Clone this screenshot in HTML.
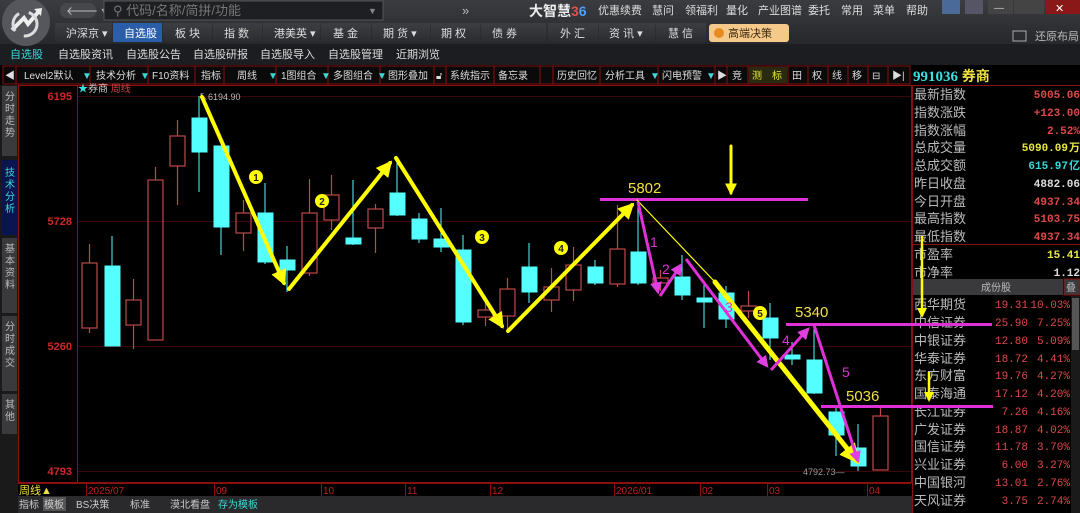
<!DOCTYPE html>
<html><head><meta charset="utf-8"><style>
html,body{margin:0;padding:0;background:#000;width:1080px;height:513px;overflow:hidden}
svg{display:block;font-family:"Liberation Sans","Noto Sans CJK SC",sans-serif}
</style></head><body>
<svg width="1080" height="513" viewBox="0 0 1080 513" xmlns="http://www.w3.org/2000/svg">
<defs>
<marker id="ya" viewBox="0 0 10 10" refX="8" refY="5" markerWidth="4" markerHeight="4" orient="auto"><path d="M0,0 L10,5 L0,10 z" fill="#ffff00"/></marker>
<marker id="ma" viewBox="0 0 10 10" refX="8" refY="5" markerWidth="4" markerHeight="4" orient="auto"><path d="M0,0 L10,5 L0,10 z" fill="#e040e0"/></marker>
<linearGradient id="tb" x1="0" y1="0" x2="0" y2="1"><stop offset="0" stop-color="#3a3c40"/><stop offset="1" stop-color="#26282b"/></linearGradient>
<linearGradient id="bt" x1="0" y1="0" x2="0" y2="1"><stop offset="0" stop-color="#3c3e42"/><stop offset="1" stop-color="#2a2c2f"/></linearGradient>
</defs>
<!-- top bars -->
<rect x="0" y="0" width="1080" height="44" fill="url(#tb)"/>
<rect x="0" y="44" width="1080" height="21" fill="#1c1d20"/>
<circle cx="26" cy="22" r="24" fill="#55575c"/>
<path d="M12 30 L24 18 L28 24 L40 10" stroke="#eee" stroke-width="4" fill="none"/>
<path d="M34 9 L42 8 L41 16" fill="#eee"/>
<circle cx="25" cy="24" r="12" stroke="#ddd" stroke-width="3" fill="none" stroke-dasharray="20 10"/>
<rect x="60" y="3" width="36" height="15" rx="7" fill="#46484c"/>
<text x="66" y="15" fill="#bbb" font-size="12">🡐 ▾</text>
<rect x="104" y="1" width="279" height="19" fill="#1e1f22" stroke="#555"/>
<text x="113" y="15" fill="#777" font-size="13">⚲ 代码/名称/简拼/功能</text>
<text x="368" y="14" fill="#888" font-size="9">▼</text>
<text x="462" y="15" fill="#bbb" font-size="13">»</text>
<text x="529" y="16" fill="#eee" font-size="14" font-weight="bold">大智慧<tspan fill="#e05050">3</tspan><tspan fill="#4aa0ff">6</tspan></text>
<g fill="#ddd" font-size="11">
<text x="598" y="14">优惠续费</text><text x="652" y="14">慧问</text><text x="685" y="14">领福利</text><text x="726" y="14">量化</text><text x="758" y="14">产业图谱</text><text x="808" y="14">委托</text><text x="841" y="14">常用</text><text x="873" y="14">菜单</text><text x="906" y="14">帮助</text>
</g>
<rect x="942" y="0" width="18" height="14" fill="#4a6a9a"/><rect x="965" y="0" width="18" height="14" fill="#556"/>
<rect x="988" y="0" width="25" height="14" fill="#444"/><rect x="1014" y="0" width="30" height="14" fill="#444"/><rect x="1046" y="0" width="34" height="14" fill="#8a1818"/>
<text x="1055" y="12" fill="#fff" font-size="11">✕</text><text x="994" y="11" fill="#ccc" font-size="10">—</text>
<g font-size="11" fill="#ddd">
<rect x="55" y="23" width="57" height="19" fill="url(#bt)"/><text x="66" y="37">沪深京 ▾</text>
<rect x="113" y="23" width="49" height="19" fill="#2a5ea8"/><text x="124" y="37" fill="#fff">自选股</text>
<rect x="163" y="23" width="49" height="19" fill="url(#bt)"/><text x="175" y="37">板  块</text>
<rect x="213" y="23" width="49" height="19" fill="url(#bt)"/><text x="224" y="37">指  数</text>
<rect x="263" y="23" width="57" height="19" fill="url(#bt)"/><text x="274" y="37">港美英 ▾</text>
<rect x="321" y="23" width="50" height="19" fill="url(#bt)"/><text x="333" y="37">基  金</text>
<rect x="372" y="23" width="58" height="19" fill="url(#bt)"/><text x="383" y="37">期  货 ▾</text>
<rect x="431" y="23" width="49" height="19" fill="url(#bt)"/><text x="441" y="37">期  权</text>
<rect x="481" y="23" width="65" height="19" fill="url(#bt)"/><text x="492" y="37">债  券</text>
<rect x="548" y="23" width="50" height="19" fill="url(#bt)"/><text x="560" y="37">外  汇</text>
<rect x="599" y="23" width="56" height="19" fill="url(#bt)"/><text x="609" y="37">资  讯 ▾</text>
<rect x="656" y="23" width="50" height="19" fill="url(#bt)"/><text x="668" y="37">慧  信</text>
<rect x="709" y="24" width="80" height="18" rx="3" fill="#f5c98a"/><text x="728" y="37" fill="#3a2a10">高端决策</text><circle cx="719" cy="33" r="5" fill="#e88a20"/>
<text x="1035" y="40" fill="#bbb">还原布局</text><rect x="1013" y="31" width="13" height="10" fill="none" stroke="#aaa"/>
</g>
<g font-size="11" fill="#ddd">
<text x="10" y="58" fill="#3cd8d8">自选股</text><text x="58" y="58">自选股资讯</text><text x="126" y="58">自选股公告</text><text x="193" y="58">自选股研报</text><text x="260" y="58">自选股导入</text><text x="328" y="58">自选股管理</text><text x="396" y="58">近期浏览</text>
</g>
<!-- toolbar row -->
<rect x="0" y="65" width="1080" height="20" fill="#000"/>
<rect x="3" y="66" width="907" height="18" fill="#0a0a0a" stroke="#8a1010"/>
<g stroke="#8a1010"><path d="M16 66v18M90 66v18M148 66v18M195 66v18M224 66v18M276 66v18M328 66v18M380 66v18M434 66v18M446 66v18M494 66v18M540 66v18M553 66v18M600 66v18M658 66v18M715 66v18M727 66v18M748 66v18M768 66v18M788 66v18M808 66v18M828 66v18M848 66v18M868 66v18M888 66v18"/></g>
<rect x="749" y="67" width="38" height="16" fill="#2a2a10"/>
<g font-size="10" fill="#ddd">
<text x="5" y="79">◀</text><text x="24" y="79">Level2默认</text><text x="82" y="79" fill="#3cd8d8">▼</text><text x="96" y="79">技术分析</text><text x="140" y="79" fill="#3cd8d8">▼</text><text x="152" y="79">F10资料</text><text x="201" y="79">指标</text><text x="237" y="79">周线</text><text x="268" y="79" fill="#3cd8d8">▼</text><text x="281" y="79">1图组合</text><text x="321" y="79" fill="#3cd8d8">▼</text><text x="333" y="79">多图组合</text><text x="377" y="79" fill="#3cd8d8">▼</text><text x="388" y="79">图形叠加</text><text x="436" y="79">🔓︎</text><text x="450" y="79">系统指示</text><text x="498" y="79">备忘录</text><text x="557" y="79">历史回忆</text><text x="605" y="79">分析工具</text><text x="650" y="79" fill="#3cd8d8">▼</text><text x="662" y="79">闪电预警</text><text x="706" y="79" fill="#3cd8d8">▼</text><text x="717" y="79">▶</text><text x="732" y="79">竞</text><text x="752" y="79" fill="#e8e840">测</text><text x="772" y="79" fill="#e8e840">标</text><text x="792" y="79">田</text><text x="812" y="79">权</text><text x="832" y="79">线</text><text x="852" y="79">移</text><text x="872" y="79">⊟</text><text x="892" y="79">▶|</text>
</g>
<text x="913" y="81" font-size="15" font-weight="bold" fill="#3ce0e0" font-family="Liberation Serif,serif">991036 <tspan fill="#f0e040" font-family="Noto Sans CJK SC,sans-serif" font-size="14">券商</tspan></text>
<!-- left side tabs -->
<rect x="0" y="85" width="18" height="428" fill="#1a1a1a"/>
<rect x="2" y="86" width="15" height="70" fill="#3a3a3c"/>
<rect x="2" y="160" width="15" height="75" fill="#0a1450"/>
<rect x="2" y="238" width="15" height="75" fill="#3a3a3c"/>
<rect x="2" y="316" width="15" height="75" fill="#3a3a3c"/>
<rect x="2" y="394" width="15" height="40" fill="#3a3a3c"/>
<g font-size="10" fill="#bbb" text-anchor="middle">
<text x="10" y="100">分</text><text x="10" y="112">时</text><text x="10" y="124">走</text><text x="10" y="136">势</text>
<text x="10" y="176" fill="#3cd8d8">技</text><text x="10" y="188" fill="#3cd8d8">术</text><text x="10" y="200" fill="#3cd8d8">分</text><text x="10" y="212" fill="#3cd8d8">析</text>
<text x="10" y="252">基</text><text x="10" y="264">本</text><text x="10" y="276">资</text><text x="10" y="288">料</text>
<text x="10" y="330">分</text><text x="10" y="342">时</text><text x="10" y="354">成</text><text x="10" y="366">交</text>
<text x="10" y="408">其</text><text x="10" y="420">他</text>
</g>
<!-- chart frame -->
<rect x="18.5" y="85.5" width="893" height="397" fill="#000" stroke="#8a1010"/>
<path d="M77.5 85v398" stroke="#8a1010"/>
<g stroke="#3a0808"><path d="M78 221.5h833M78 346.5h833M78 96.5h833M78 471.5h833"/></g>
<g fill="#d02828" font-size="11" font-weight="bold" text-anchor="end">
<text x="72" y="100">6195</text><text x="72" y="225">5728</text><text x="72" y="350">5260</text><text x="72" y="475">4793</text>
</g>
<text x="78" y="92" font-size="10" fill="#ccc"><tspan fill="#3ce0e0">★</tspan>券商 <tspan fill="#d04040">周线</tspan></text>
<text x="199" y="100" font-size="9" fill="#bbb">↖6194.90</text>
<text x="803" y="475" font-size="9" fill="#999">4792.73—</text>
<!-- candles -->
<g stroke="#c04848" fill="none" stroke-width="1.2">
<path d="M89.5 244v19M89.5 328v5"/><rect x="82" y="263" width="15" height="65"/>
<path d="M133.5 279v70"/><rect x="126" y="300" width="15" height="25" fill="#000"/>
<path d="M155.5 167v13"/><rect x="148" y="180" width="15" height="160"/>
<path d="M177.5 120v16M177.5 166v39"/><rect x="170" y="136" width="15" height="30"/>
<path d="M243.5 200v13M243.5 233v18"/><rect x="236" y="213" width="15" height="20"/>
<path d="M309.5 179v34M309.5 273v3"/><rect x="302" y="213" width="15" height="60"/>
<path d="M331.5 175v20M331.5 220v10"/><rect x="324" y="195" width="15" height="25"/>
<path d="M375.5 204v5M375.5 228v25"/><rect x="368" y="209" width="15" height="19"/>
<path d="M485.5 303v7M485.5 317v9"/><rect x="478" y="310" width="15" height="7"/>
<path d="M507.5 278v11M507.5 316v17"/><rect x="500" y="289" width="15" height="27"/>
<path d="M551.5 268v19M551.5 300v12"/><rect x="544" y="287" width="15" height="13"/>
<path d="M573.5 247v18M573.5 290v11"/><rect x="566" y="265" width="15" height="25"/>
<path d="M617.5 205v44M617.5 284v3"/><rect x="610" y="249" width="15" height="35"/>
<path d="M660.5 270v8M660.5 283v8"/><rect x="653" y="278" width="15" height="5"/>
<path d="M748.5 291v15M748.5 311v7"/><rect x="741" y="306" width="15" height="5"/>
<path d="M880.5 405v11"/><rect x="873" y="416" width="15" height="54"/>
</g>
<g fill="#54ffff" stroke="#54ffff">
<path d="M112 236v110M199 96v96M221 146v109M265 183v81M287 246v46M353 180v65M397 157v59M419 213v30M441 208v44M463 235v90M529 243v60M595 260v25M638 200v85M682 255v45M704 285v43M726 286v42M770 303v57M792 342v23M814 324v70M836 405v51M858 424v47"/>
<rect x="105" y="266" width="15" height="80"/>
<rect x="192" y="118" width="15" height="34"/>
<rect x="214" y="146" width="15" height="81"/>
<rect x="258" y="213" width="15" height="49"/>
<rect x="280" y="260" width="15" height="10"/>
<rect x="346" y="238" width="15" height="6"/>
<rect x="390" y="193" width="15" height="22"/>
<rect x="412" y="219" width="15" height="20"/>
<rect x="434" y="239" width="15" height="8"/>
<rect x="456" y="250" width="15" height="72"/>
<rect x="522" y="267" width="15" height="25"/>
<rect x="588" y="267" width="15" height="16"/>
<rect x="631" y="252" width="15" height="31"/>
<rect x="675" y="277" width="15" height="18"/>
<rect x="697" y="298" width="15" height="4"/>
<rect x="719" y="293" width="15" height="26"/>
<rect x="763" y="318" width="15" height="20"/>
<rect x="785" y="355" width="15" height="4"/>
<rect x="807" y="360" width="15" height="33"/>
<rect x="829" y="412" width="15" height="23"/>
<rect x="851" y="448" width="15" height="18"/>
</g>
<!-- magenta lines -->
<g stroke="#e030d8" stroke-width="3">
<path d="M600 199.5h208M786 324.5h206M821 406.5h172"/>
</g>
<!-- yellow arrows -->
<g stroke="#ffff00" fill="none" stroke-linecap="round">
<path d="M202 97 L284 283" stroke-width="4" marker-end="url(#ya)"/>
<path d="M289 289 L390 163" stroke-width="4" marker-end="url(#ya)"/>
<path d="M396 158 L502 326" stroke-width="4" marker-end="url(#ya)"/>
<path d="M508 331 L632 205" stroke-width="4" marker-end="url(#ya)"/>
<path d="M637 200 L715 282" stroke-width="1.2"/>
<path d="M715 282 L857 461" stroke-width="5" marker-end="url(#ya)"/>
<path d="M731 146 L731 193" stroke-width="3" marker-end="url(#ya)"/>
<path d="M922 236 L922 316" stroke-width="2.5" marker-end="url(#ya)"/>
<path d="M929 372 L929 400" stroke-width="2.5" marker-end="url(#ya)"/>
</g>
<g stroke="#e030d8" fill="none" stroke-width="3">
<path d="M638 202 L658 292" marker-end="url(#ma)"/>
<path d="M660 296 L681 265" marker-end="url(#ma)"/>
<path d="M686 259 L767 366" marker-end="url(#ma)"/>
<path d="M771 370 L808 329" marker-end="url(#ma)"/>
<path d="M814 325 L858 461" marker-end="url(#ma)"/>
</g>
<g fill="#ffff00" stroke="none">
<circle cx="256" cy="177" r="7"/><circle cx="322" cy="201" r="7"/><circle cx="482" cy="237" r="7"/><circle cx="561" cy="248" r="7"/><circle cx="760" cy="313" r="7"/>
</g>
<g font-size="10" font-weight="bold" fill="#222" text-anchor="middle">
<text x="256" y="181">1</text><text x="322" y="205">2</text><text x="482" y="241">3</text><text x="561" y="252">4</text><text x="760" y="317">5</text>
</g>
<g font-size="15" fill="#f0e040"><text x="628" y="193">5802</text><text x="795" y="317">5340</text><text x="846" y="401">5036</text></g>
<g font-size="14" fill="#e030d8"><text x="650" y="247">1</text><text x="662" y="274">2</text><text x="725" y="312">3</text><text x="782" y="345">4</text><text x="842" y="377">5</text></g>
<!-- date row -->
<rect x="18" y="483" width="894" height="13" fill="#000"/>
<path d="M18 483.5h893" stroke="#8a1010"/>
<g stroke="#8a1010"><path d="M86.5 483v13M214.5 483v13M321.5 483v13M405.5 483v13M490.5 483v13M614.5 483v13M700.5 483v13M767.5 483v13M867.5 483v13"/></g>
<text x="19" y="494" font-size="11" fill="#f0e040">周线▲</text>
<g font-size="10" fill="#c02020"><text x="88" y="494">2025/07</text><text x="216" y="494">09</text><text x="323" y="494">10</text><text x="407" y="494">11</text><text x="492" y="494">12</text><text x="616" y="494">2026/01</text><text x="702" y="494">02</text><text x="769" y="494">03</text><text x="869" y="494">04</text></g>
<rect x="18" y="496" width="894" height="17" fill="#2a2a2c"/>
<g font-size="10" fill="#ccc"><text x="19" y="508">指标</text><rect x="43" y="497" width="23" height="14" fill="#555"/><text x="44" y="508">模板</text><text x="76" y="508">BS决策</text><text x="130" y="508">标准</text><text x="170" y="508">漠北看盘</text><text x="218" y="508" fill="#3cd8d8">存为模板</text></g>
<!-- right panel -->
<rect x="912" y="85" width="168" height="428" fill="#000"/>
<path d="M912.5 85v428M912 85.5h168M912 244.5h168" stroke="#8a1010"/>
<g font-size="13" fill="#bbb">
<text x="914" y="99">最新指数</text><text x="914" y="117">指数涨跌</text><text x="914" y="135">指数涨幅</text><text x="914" y="152">总成交量</text><text x="914" y="170">总成交额</text><text x="914" y="188">昨日收盘</text><text x="914" y="206">今日开盘</text><text x="914" y="223">最高指数</text><text x="914" y="241">最低指数</text><text x="914" y="259">市盈率</text><text x="914" y="277">市净率</text>
</g>
<g font-size="11" font-weight="bold" text-anchor="end" font-family="Liberation Mono,monospace">
<text x="1080" y="98" fill="#e04848">5005.06</text><text x="1080" y="116" fill="#e04848">+123.00</text><text x="1080" y="134" fill="#e04848">2.52%</text><text x="1068" y="151" fill="#e8e840">5090.09</text><text x="1080" y="151" fill="#e8e840" font-family="Noto Sans CJK SC">万</text><text x="1068" y="169" fill="#3cd8d8">615.97</text><text x="1080" y="169" fill="#3cd8d8" font-family="Noto Sans CJK SC">亿</text><text x="1080" y="187" fill="#ddd">4882.06</text><text x="1080" y="205" fill="#e04848">4937.34</text><text x="1080" y="222" fill="#e04848">5103.75</text><text x="1080" y="240" fill="#e04848">4937.34</text><text x="1080" y="258" fill="#e8e840">15.41</text><text x="1080" y="276" fill="#ddd">1.12</text>
</g>
<rect x="913" y="279" width="150" height="16" fill="#3a3a3c"/><rect x="1064" y="279" width="16" height="16" fill="#3a3a3c" stroke="#8a1010"/>
<text x="981" y="291" font-size="10" fill="#bbb">成份股</text><text x="1066" y="291" font-size="10" fill="#bbb">叠</text>
<rect x="1071" y="296" width="9" height="217" fill="#1a1a1a"/><rect x="1072" y="298" width="7" height="52" fill="#555"/>
<g font-size="13" fill="#bbb">
<text x="914" y="309">西华期货</text><text x="914" y="327">中信证券</text><text x="914" y="345">中银证券</text><text x="914" y="363">华泰证券</text><text x="914" y="380">东方财富</text><text x="914" y="398">国泰海通</text><text x="914" y="416">长江证券</text><text x="914" y="434">广发证券</text><text x="914" y="451">国信证券</text><text x="914" y="469">兴业证券</text><text x="914" y="487">中国银河</text><text x="914" y="505">天风证券</text>
</g>
<g font-size="11" fill="#e04848" text-anchor="end" font-family="Liberation Mono,monospace">
<text x="1028" y="308">19.31</text><text x="1028" y="326">25.90</text><text x="1028" y="344">12.80</text><text x="1028" y="362">18.72</text><text x="1028" y="379">19.76</text><text x="1028" y="397">17.12</text><text x="1028" y="415">7.26</text><text x="1028" y="433">18.87</text><text x="1028" y="450">11.78</text><text x="1028" y="468">6.00</text><text x="1028" y="486">13.01</text><text x="1028" y="504">3.75</text>
<text x="1070" y="308">10.03%</text><text x="1070" y="326">7.25%</text><text x="1070" y="344">5.09%</text><text x="1070" y="362">4.41%</text><text x="1070" y="379">4.27%</text><text x="1070" y="397">4.20%</text><text x="1070" y="415">4.16%</text><text x="1070" y="433">4.02%</text><text x="1070" y="450">3.70%</text><text x="1070" y="468">3.27%</text><text x="1070" y="486">2.76%</text><text x="1070" y="504">2.74%</text>
</g>
<g stroke="#e030d8" stroke-width="3"><path d="M900 324.5h92M900 406.5h93"/></g>
<g stroke="#ffff00" fill="none" stroke-width="2.5"><path d="M922 236 L922 316" marker-end="url(#ya)"/><path d="M929 372 L929 400" marker-end="url(#ya)"/></g>
</svg>
</body></html>
